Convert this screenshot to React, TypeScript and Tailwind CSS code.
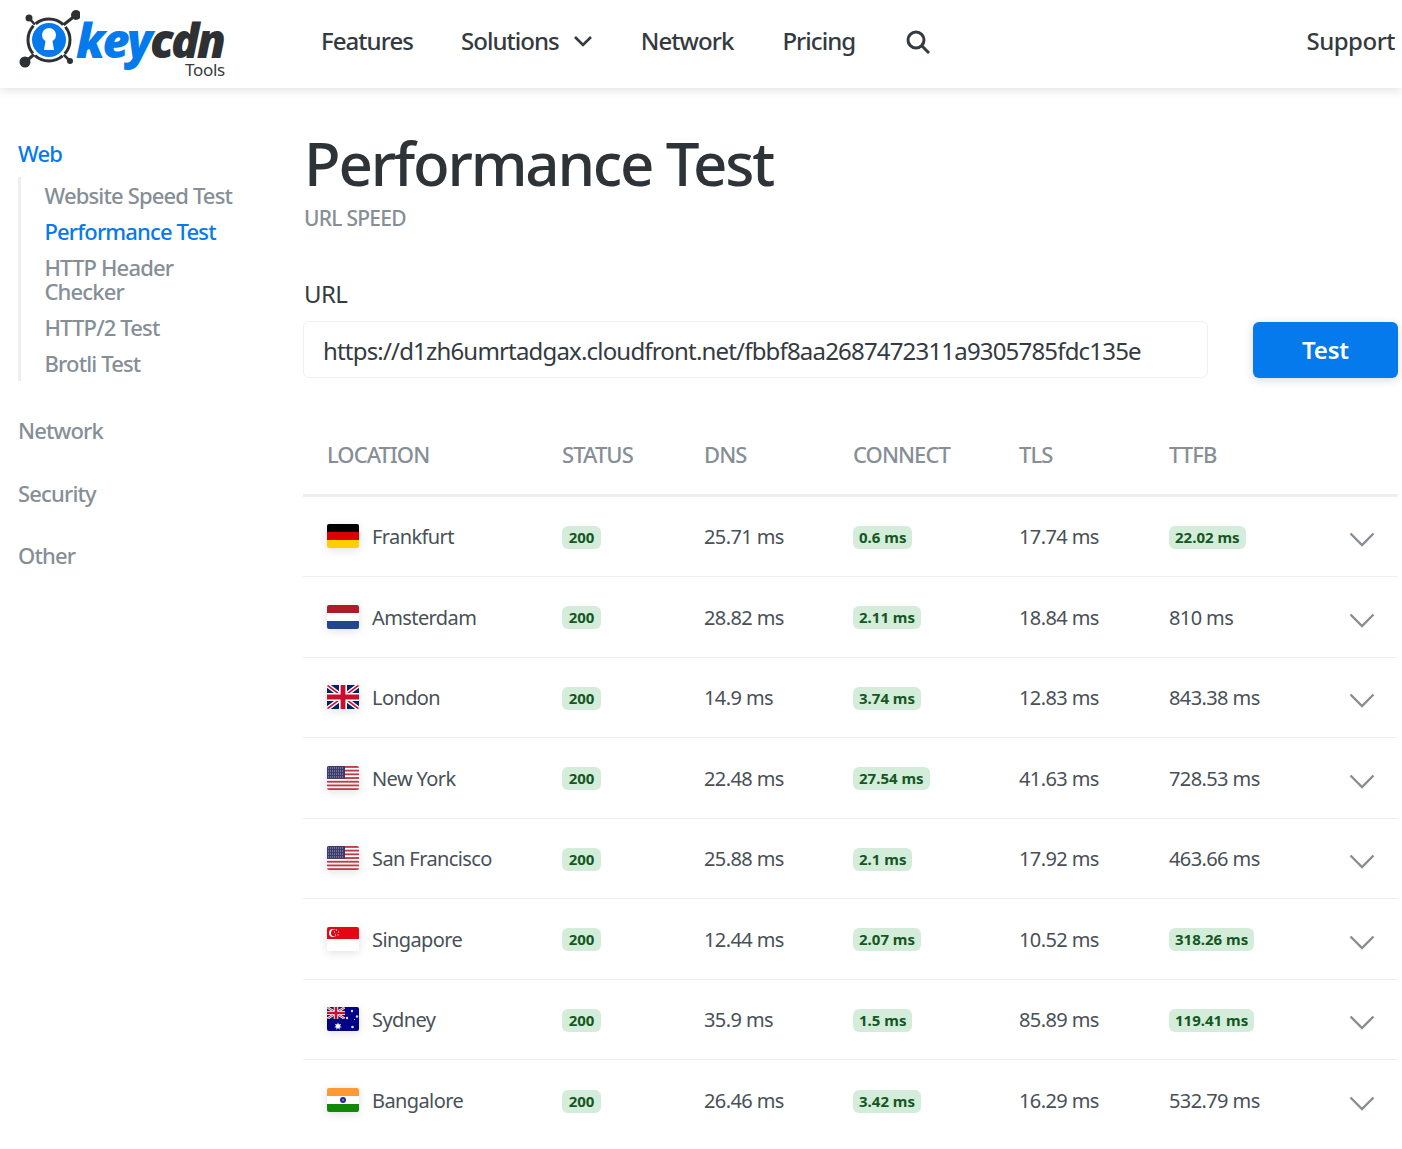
type Flag = "de" | "nl" | "gb" | "us" | "sg" | "au" | "in";

type Row = {
  city: string;
  flag: Flag;
  dns: string;
  connect: string;
  tls: string;
  ttfb: string;
  ttfbFast?: boolean;
};

const rows: Row[] = [
  { city: "Frankfurt", flag: "de", dns: "25.71 ms", connect: "0.6 ms", tls: "17.74 ms", ttfb: "22.02 ms", ttfbFast: true },
  { city: "Amsterdam", flag: "nl", dns: "28.82 ms", connect: "2.11 ms", tls: "18.84 ms", ttfb: "810 ms" },
  { city: "London", flag: "gb", dns: "14.9 ms", connect: "3.74 ms", tls: "12.83 ms", ttfb: "843.38 ms" },
  { city: "New York", flag: "us", dns: "22.48 ms", connect: "27.54 ms", tls: "41.63 ms", ttfb: "728.53 ms" },
  { city: "San Francisco", flag: "us", dns: "25.88 ms", connect: "2.1 ms", tls: "17.92 ms", ttfb: "463.66 ms" },
  { city: "Singapore", flag: "sg", dns: "12.44 ms", connect: "2.07 ms", tls: "10.52 ms", ttfb: "318.26 ms", ttfbFast: true },
  { city: "Sydney", flag: "au", dns: "35.9 ms", connect: "1.5 ms", tls: "85.89 ms", ttfb: "119.41 ms", ttfbFast: true },
  { city: "Bangalore", flag: "in", dns: "26.46 ms", connect: "3.42 ms", tls: "16.29 ms", ttfb: "532.79 ms" },
];

function UnionJack() {
  return (
    <>
      <rect width="32" height="24" fill="#012169" />
      <path d="M0 0L32 24M32 0L0 24" stroke="#fff" strokeWidth="4.5" />
      <path d="M0 0L32 24M32 0L0 24" stroke="#c8102e" strokeWidth="1.6" />
      <path d="M16 0V24M0 12H32" stroke="#fff" strokeWidth="8" />
      <path d="M16 0V24M0 12H32" stroke="#c8102e" strokeWidth="4.8" />
    </>
  );
}

function FlagIcon({ code }: { code: Flag }) {
  return (
    <span className="w-8 h-6 rounded-[2px] overflow-hidden shrink-0 mb-[1.5px] shadow-[0_2px_10px_rgba(0,0,0,0.12)]">
      <svg viewBox="0 0 32 24" width="32" height="24" className="block">
        {code === "de" && (
          <>
            <rect width="32" height="8" fill="#000" />
            <rect y="8" width="32" height="8" fill="#dd0000" />
            <rect y="16" width="32" height="8" fill="#ffce00" />
          </>
        )}
        {code === "nl" && (
          <>
            <rect width="32" height="8" fill="#ae1c28" />
            <rect y="8" width="32" height="8" fill="#fff" />
            <rect y="16" width="32" height="8" fill="#21468b" />
          </>
        )}
        {code === "gb" && <UnionJack />}
        {code === "us" && (
          <>
            <rect width="32" height="24" fill="#fff" />
            {[0, 3.7, 7.4, 11.1, 14.8, 18.5, 22.2].map((y) => (
              <rect key={y} y={y} width="32" height="1.85" fill="#bf3a47" />
            ))}
            <rect width="18" height="13" fill="#3c3b6e" />
            <path d="M1 2H17M1 5H17M1 8H17M1 11H17" stroke="#aab" strokeWidth="1" strokeDasharray="1 1" />
          </>
        )}
        {code === "sg" && (
          <>
            <rect width="32" height="12" fill="#e30613" />
            <rect y="12" width="32" height="12" fill="#fff" />
            <circle cx="6" cy="6" r="4" fill="#fff" />
            <circle cx="7.6" cy="6" r="3.6" fill="#e30613" />
            <path d="M9 3.2h1M7 5h1M11 5h1M8 8h1M10.5 8h1" stroke="#fff" strokeWidth="1.2" />
          </>
        )}
        {code === "au" && (
          <>
            <rect width="32" height="24" fill="#00008b" />
            <svg width="18" height="12" viewBox="0 0 32 24" preserveAspectRatio="none">
              <UnionJack />
            </svg>
            <path d="M11 15.5l.9 2.1 2.2-.6-1.2 2 1.9 1.2-2.3.3.2 2.2-1.7-1.6-1.7 1.6.2-2.2-2.3-.3 1.9-1.2-1.2-2 2.2.6z" fill="#fff" />
            <g fill="#dfe0f2">
              <circle cx="25" cy="4" r="1.2" />
              <circle cx="20" cy="11" r="1.2" />
              <circle cx="30" cy="9.5" r="1.2" />
              <circle cx="25.5" cy="20" r="1.3" />
              <circle cx="27.5" cy="12.5" r="0.6" />
            </g>
          </>
        )}
        {code === "in" && (
          <>
            <rect width="32" height="8" fill="#ff9933" />
            <rect y="8" width="32" height="8" fill="#fff" />
            <rect y="16" width="32" height="8" fill="#138808" />
            <circle cx="16" cy="12" r="3" fill="#2a2a8c" />
            <circle cx="16" cy="12" r="1" fill="#8f8fd0" />
          </>
        )}
      </svg>
    </span>
  );
}

function Badge({ children }: { children: string }) {
  return (
    <span className="bg-[#d4edda] text-[#155724] text-[15px] leading-[23px] font-bold tracking-[0px] rounded-[6px] px-[6px] min-w-[39px] text-center">
      {children}
    </span>
  );
}

function Logo() {
  return (
    <div className="relative w-[230px] h-[88px] shrink-0">
      <svg viewBox="0 0 80 80" width="80" height="80" className="absolute left-0 top-0">
        <g stroke="#2e3133" strokeLinecap="round" fill="#2e3133">
          <path d="M62 26L76 15" strokeWidth="3" />
          <circle cx="76" cy="15" r="5" stroke="none" />
          <path d="M29 18L37 27" strokeWidth="2.5" />
          <circle cx="29" cy="18" r="3.5" stroke="none" />
          <path d="M25 62L36 53" strokeWidth="3" />
          <circle cx="25" cy="62" r="5.5" stroke="none" />
          <path d="M62 53L70 61" strokeWidth="2.5" />
          <circle cx="70" cy="61" r="3" stroke="none" />
        </g>
        <circle cx="49" cy="40" r="21" fill="#fff" stroke="#2e3133" strokeWidth="3" strokeDasharray="30 3" strokeDashoffset="-18" />
        <circle cx="49" cy="40" r="17" fill="#047aed" />
        <circle cx="49" cy="35" r="7" fill="#fff" />
        <path d="M46 38h6l2 12h-10z" fill="#fff" />
      </svg>
      <div className="absolute left-[76px] top-[19px] font-['Open_Sans',sans-serif] italic font-extrabold text-[47px] leading-[42px] tracking-[-2.6px] whitespace-nowrap">
        <span className="text-[#047aed]">key</span>
        <span className="text-[#2e3133]">cdn</span>
      </div>
      <div className="absolute left-[185px] top-[61px] text-[17px] leading-[18px] text-[#343a40] tracking-[-0.3px]">
        Tools
      </div>
    </div>
  );
}

function Header() {
  return (
    <header className="h-[88px] flex items-center bg-white shadow-[0_2px_10px_rgba(0,0,0,0.12)] pr-[7px] relative text-[24px] text-[#343a40] tracking-[-0.95px]">
      <Logo />
      <nav className="flex items-center gap-12 ml-[91px] mb-[6px] font-medium">
        <span>Features</span>
        <span className="flex items-center gap-[14px]">
          Solutions
          <svg viewBox="0 0 20 12" width="20" height="12" fill="none" stroke="#343a40" strokeWidth="2.6">
            <path d="M2 2L10 10L18 2" />
          </svg>
        </span>
        <span>Network</span>
        <span className="ml-px">Pricing</span>
        <svg viewBox="0 0 24 24" width="24" height="24" fill="none" stroke="#343a40" strokeWidth="3" className="ml-[3px] mt-[2px]">
          <circle cx="10" cy="10" r="8" />
          <path d="M16 16L23 23" />
        </svg>
      </nav>
      <span className="ml-auto mb-[6px] font-medium tracking-[-0.5px]">Support</span>
    </header>
  );
}

function Sidebar() {
  const items = ["Website Speed Test", "Performance Test", "HTTP Header Checker", "HTTP/2 Test", "Brotli Test"];
  return (
    <aside className="w-[303px] shrink-0 pl-[18px] pt-[53px] text-[22px] leading-[24px] font-medium text-[#868e96] tracking-[-0.85px]">
      <div className="text-[#047aed]">Web</div>
      <ul className="mt-[12px] border-l-[3px] border-[#eceef1] pl-[23.5px] w-[225px]">
        {items.map((item) => (
          <li
            key={item}
            className={`py-[6px] ${item === "Performance Test" ? "text-[#047aed]" : ""}`}
          >
            {item}
          </li>
        ))}
      </ul>
      <div className="mt-[37px]">Network</div>
      <div className="mt-[39px]">Security</div>
      <div className="mt-[38px]">Other</div>
    </aside>
  );
}

const gridCols = "grid grid-cols-[235px_142px_149px_166px_150px_181px_72px] items-center";

export default function App() {
  return (
    <div className="w-[1402px] bg-white font-['Noto_Sans',sans-serif] text-[#343a40]">
      <Header />
      <div className="flex">
        <Sidebar />
        <main className="w-[1095px] pt-[42px]">
          <h1 className="text-[60px] leading-[66px] font-medium tracking-[-2.2px] text-[#2e3338] pl-px">Performance Test</h1>
          <p className="text-[21px] leading-[28px] font-medium text-[#868e96] tracking-[-0.75px] mt-[8px] pl-px">URL SPEED</p>

          <label className="block text-[24px] leading-[32px] mt-[46px] tracking-[-0.6px] pl-px">URL</label>
          <div className="flex items-start gap-[45px] mt-[11px]">
            <div className="w-[905px] h-[57px] border border-[#eff0f2] rounded-[6px] flex items-center pl-[19px] pt-[2px] text-[24px] tracking-[-0.82px] whitespace-nowrap">
              https://d1zh6umrtadgax.cloudfront.net/fbbf8aa2687472311a9305785fdc135e
            </div>
            <button className="w-[145px] h-[56px] mt-px bg-[#047aed] text-white text-[24px] font-semibold rounded-[6px] shadow-[0_2px_10px_rgba(0,0,0,0.15)] tracking-[-0.2px]">
              Test
            </button>
          </div>

          <div className={`${gridCols} h-[118.7px] pt-[37px] border-b-[3px] border-[#eceef1] text-[22px] font-medium text-[#868e96] tracking-[-0.95px]`}>
            <div className="pl-6">LOCATION</div>
            <div className="pl-6">STATUS</div>
            <div className="pl-6">DNS</div>
            <div className="pl-6">CONNECT</div>
            <div className="pl-6">TLS</div>
            <div className="pl-6">TTFB</div>
            <div />
          </div>

          {rows.map((row, i) => (
            <div
              key={row.city}
              className={`${gridCols} h-[80.5px] pt-[1.5px] text-[20px] tracking-[-0.6px] text-[#495057] ${i < rows.length - 1 ? "border-b border-[#eceef1]" : ""}`}
            >
              <div className="pl-6 flex items-center gap-[13px]">
                <FlagIcon code={row.flag} />
                <span>{row.city}</span>
              </div>
              <div className="pl-6 flex">
                <Badge>200</Badge>
              </div>
              <div className="pl-6">{row.dns}</div>
              <div className="pl-6 flex">
                <Badge>{row.connect}</Badge>
              </div>
              <div className="pl-6">{row.tls}</div>
              <div className="pl-6 flex">
                {row.ttfbFast ? <Badge>{row.ttfb}</Badge> : row.ttfb}
              </div>
              <div className="flex justify-end pr-[23px] pt-[5px]">
                <svg viewBox="0 0 26 15" width="26" height="15" fill="none" stroke="#868e96" strokeWidth="2.4">
                  <path d="M1.5 1.5L13 13L24.5 1.5" />
                </svg>
              </div>
            </div>
          ))}
        </main>
      </div>
    </div>
  );
}
